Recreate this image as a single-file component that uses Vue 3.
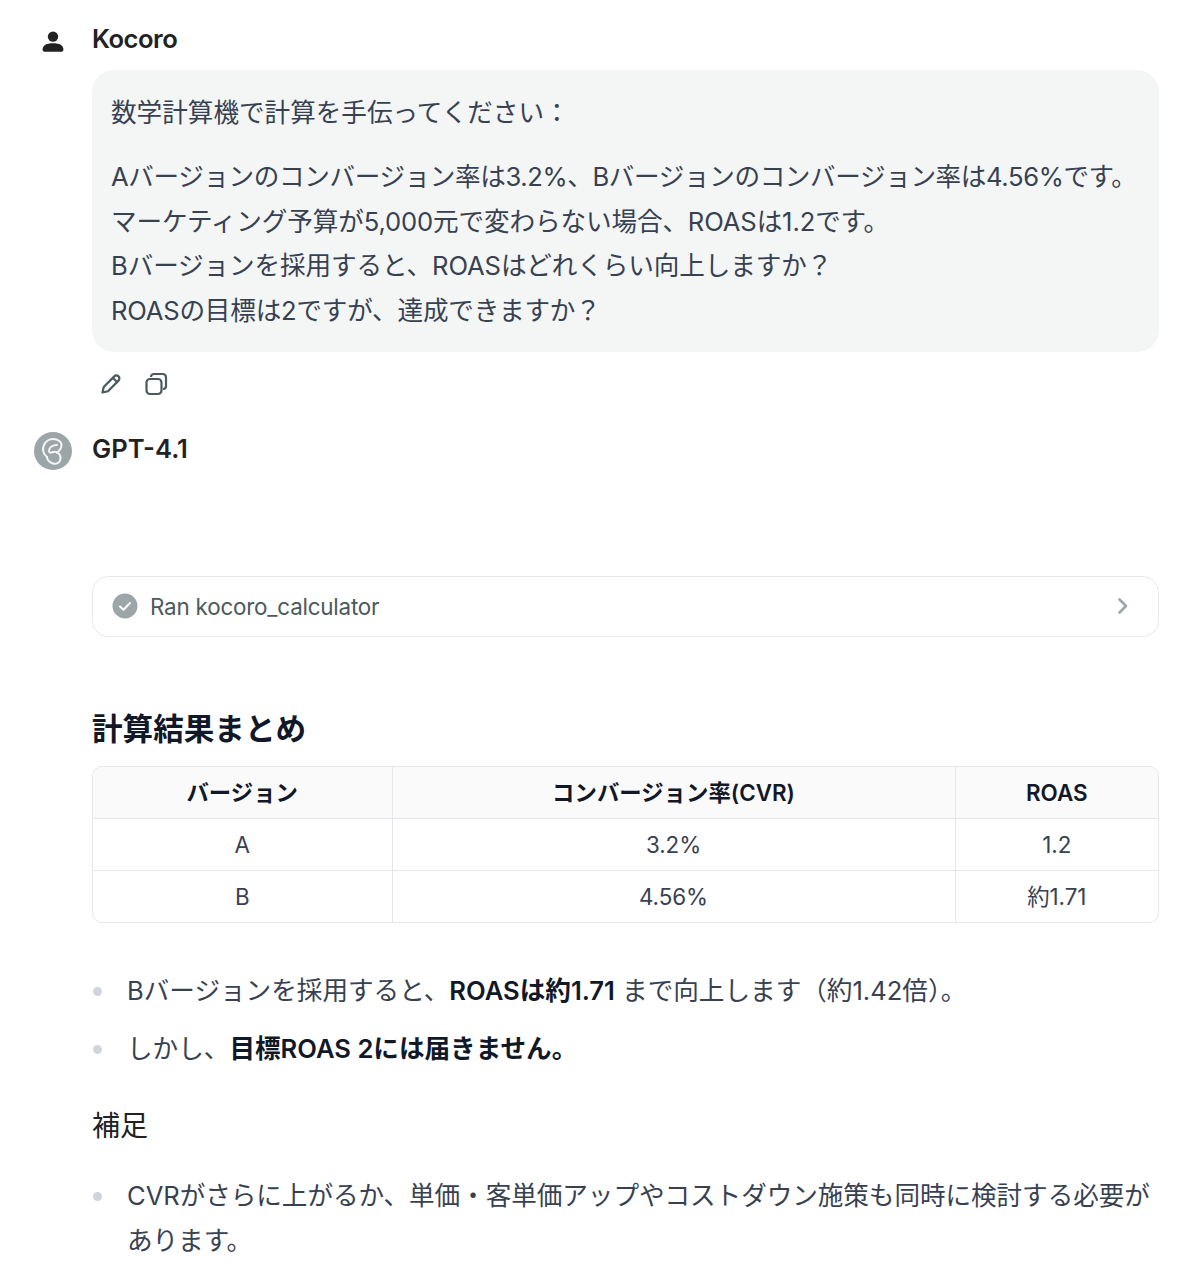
<template>
  <div class="chat">
    <!-- user message -->
    <section class="msg">
      <div class="avatar">
        <svg width="26" height="26" viewBox="0 0 26 26"><circle cx="13" cy="8.6" r="5.2" fill="#222" /><path d="M2.6 21.500c0-4.200 3.800-6.200 10.400-6.200s10.400 2 10.400 6.200c0 1.500-1 2.300-2.500 2.300H5.100c-1.500 0-2.500-.8-2.500-2.300z" fill="#222" /></svg>
      </div>
      <div class="body">
        <div class="name kocoro">Kocoro</div>
        <div class="bubble">
          <p class="first">数学計算機で計算を手伝ってください：</p>
          <p class="last">
            <span class="line l1">Aバージョンのコンバージョン率は3.2%、Bバージョンのコンバージョン率は4.56%です。</span>
            <span class="line l2">マーケティング予算が5,000元で変わらない場合、ROASは1.2です。</span>
            <span class="line l3">Bバージョンを採用すると、ROASはどれくらい向上しますか？</span>
            <span class="line l4">ROASの目標は2ですが、達成できますか？</span>
          </p>
        </div>
        <div class="actions">
          <svg width="24" height="24" viewBox="0 0 24 24" fill="none" stroke="#4b5a5c" stroke-width="2.200" stroke-linejoin="round" stroke-linecap="round"><path d="M3.500 20.500l1.200-5.500L15.300 4.400c1.200-1.200 3-1.200 4.200 0s1.200 3 0 4.200L9 19.200z" /><path d="M14 6l4 4" /></svg>
          <svg width="24" height="24" viewBox="0 0 24 24" fill="none" stroke="#4b5a5c" stroke-width="2.200" stroke-linejoin="round"><rect x="2.500" y="7" width="15" height="15" rx="3.500" /><path d="M7 5c0-1.800 1.300-3 3-3h8.500C20.500 2 22 3.500 22 5.500V14c0 1.700-1.200 3-3 3" /></svg>
        </div>
      </div>
    </section>

    <!-- assistant message -->
    <section class="msg bot">
      <div class="avatar">
        <span class="logo">
          <svg width="38" height="38" viewBox="0 0 38 38" fill="none" stroke="#f4f6f6" stroke-width="2" stroke-linecap="round" stroke-linejoin="round"><path d="M13 25C9 22 8 17 10 13c2-4 6-6 9-6 5 0 9 3 8.500 7-.5 3-2.500 5-4.500 7" /><path d="M23 13c-4 0-8 2-8 6 0 2 2 2 4 1 4-1 8 2 7.500 7-.5 4-4.500 5.500-7.500 4.500-3-1-6-3.500-6-6.500" /></svg>
        </span>
      </div>
      <div class="body">
        <div class="name">GPT-4.1</div>
        <div class="tool">
          <svg width="26" height="26" viewBox="0 0 26 26"><circle cx="13" cy="13" r="12.500" fill="#9ca6a8" /><path d="M8 13.500l3.500 3.300L18 10" fill="none" stroke="#fff" stroke-width="2" stroke-linecap="round" stroke-linejoin="round" /></svg>
          <span class="tool-label">Ran kocoro_calculator</span>
          <svg class="chevron" width="24" height="24" viewBox="0 0 24 24" fill="none" stroke="#9ca6a8" stroke-width="2.600" stroke-linecap="round" stroke-linejoin="round"><path d="M8.500 5.500l6.500 6.500-6.500 6.500" /></svg>
        </div>
        <h3>計算結果まとめ</h3>
        <div class="table-wrap">
          <table>
            <thead>
              <tr>
                <th class="c1">バージョン</th>
                <th>コンバージョン率(CVR)</th>
                <th class="c3">ROAS</th>
              </tr>
            </thead>
            <tbody>
              <tr v-for="row in rows" :key="row[0]">
                <td v-for="cell in row" :key="cell">{{ cell }}</td>
              </tr>
            </tbody>
          </table>
        </div>
        <ul class="list-a">
          <li>Bバージョンを採用すると、<strong>ROASは約1.71</strong> まで向上します（約1.42倍）。</li>
          <li>しかし、<strong>目標ROAS 2には届きません。</strong></li>
        </ul>
        <p class="note">補足</p>
        <ul class="list-b">
          <li>CVRがさらに上がるか、単価・客単価アップやコストダウン施策も同時に検討する必要があります。</li>
        </ul>
      </div>
    </section>
  </div>
</template>

<script setup>
const rows = [
  ['A', '3.2%', '1.2'],
  ['B', '4.56%', '約1.71']
]
</script>

<style>
html, body {
  background: #fff;
}
</style>

<style scoped>
.chat {
  height: 1274px;
  overflow: hidden;
  box-sizing: border-box;
  padding: 20px 45px 0 34px;
  font-family: Inter, "Noto Sans CJK JP", sans-serif;
  color: #374151;
  font-size: 25.6px;
  line-height: 44.8px;
}

.msg {
  display: flex;
}

.bot {
  margin-top: 34px;
}

.avatar {
  width: 38px;
  margin-right: 20px;
  flex: none;
  display: flex;
  justify-content: center;
  padding-top: 8px;
  box-sizing: border-box;
}

.bot .avatar {
  padding-top: 2px;
}

.logo {
  width: 38px;
  height: 38px;
  border-radius: 50%;
  background: #9ca6a8;
  display: block;
}

.logo svg {
  display: block;
}

.body {
  flex: 1;
  min-width: 0;
}

.name {
  font-size: 25.6px;
  font-weight: 600;
  line-height: 38px;
  color: #222;
}

.kocoro {
  letter-spacing: -0.5px;
}

.bubble {
  margin-top: 12px;
  padding: 21px 19px 18px;
  background: #f4f6f6;
  border-radius: 22px;
}

.bubble p {
  margin: 0;
}

.bubble .first {
  margin-bottom: 19px;
}

.line {
  display: block;
  white-space: nowrap;
}

.l1 {
  letter-spacing: -0.38px;
}

.l2 {
  letter-spacing: -0.12px;
}

.l3 {
  letter-spacing: -0.1px;
}

.l4 {
  letter-spacing: -0.2px;
}

.actions {
  display: flex;
  gap: 21px;
  padding: 20px 7px 0;
  height: 24px;
}

.tool {
  display: flex;
  align-items: center;
  height: 61px;
  margin-top: 108px;
  padding: 0 23px 0 19px;
  box-sizing: border-box;
  border: 1px solid #e8eaeb;
  border-radius: 16px;
}

.tool-label {
  margin-left: 12px;
  padding-top: 2px;
  flex: 1;
  font-size: 22.4px;
  letter-spacing: -0.2px;
  color: #4b5a5c;
}

.chevron {
  flex: none;
}

h3 {
  margin: 69px 0 14px;
  font-size: 30.6px;
  font-weight: 600;
  line-height: 46px;
  color: #111827;
}

.table-wrap {
  border: 1px solid #e5e7eb;
  border-radius: 10px;
  overflow: hidden;
}

table {
  width: 100%;
  border-collapse: collapse;
  table-layout: fixed;
  font-size: 22.4px;
  line-height: 32px;
}

th, td {
  height: 52px;
  padding: 0;
  text-align: center;
  border-left: 1px solid #e5e7eb;
  border-top: 1px solid #e5e7eb;
  box-sizing: border-box;
}

td {
  padding-top: 1px;
  letter-spacing: -0.05px;
}

tbody tr:last-child td {
  height: 51px;
}

th:first-child, td:first-child {
  border-left: 0;
}

thead tr th {
  border-top: 0;
  background: #fafafa;
  font-weight: 600;
  color: #111827;
}

.c1 {
  width: 299px;
}

.c3 {
  width: 203px;
}

ul {
  list-style: none;
  margin: 0;
  padding: 0;
}

li {
  position: relative;
  padding-left: 35px;
}

li::before {
  content: "";
  position: absolute;
  left: 1px;
  top: 18px;
  width: 9px;
  height: 9px;
  border-radius: 50%;
  background: #d1d5db;
}

li strong {
  font-weight: 600;
  color: #111827;
}

.list-a {
  margin-top: 46px;
}

.list-a li + li {
  margin-top: 13px;
}

.note {
  margin: 32px 0 0;
  font-size: 28px;
  color: #222;
}

.list-b {
  margin-top: 26px;
  letter-spacing: -0.05px;
}
</style>
